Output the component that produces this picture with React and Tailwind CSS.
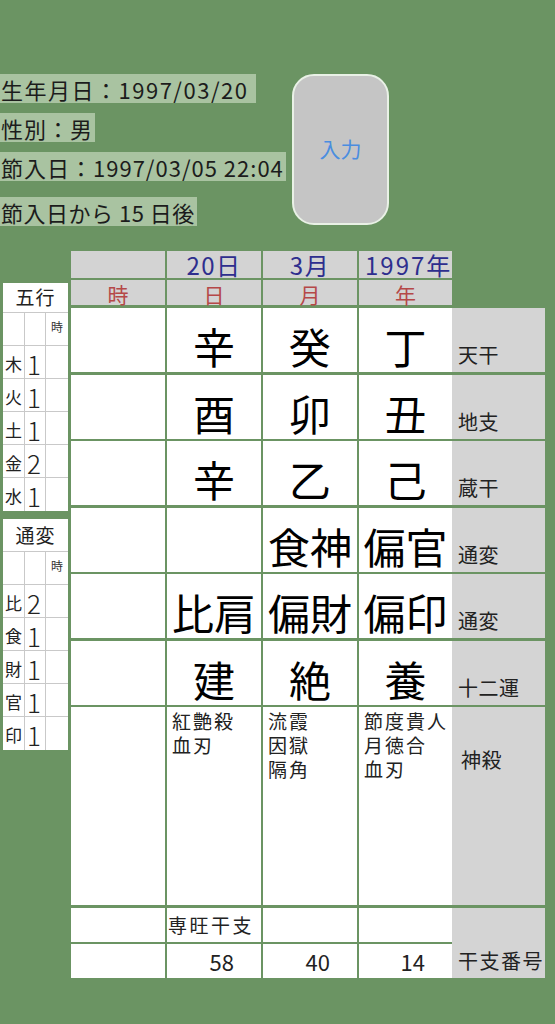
import React from "react";

const F = { fontFamily: '"Noto Sans CJK JP", "Noto Sans", sans-serif' };

function InfoLine({ children, className = "" }) {
  return (
    <div className={"h-[29px] bg-[#a9c3a1] flex items-center text-[22px] text-[#1c1c1c] leading-none whitespace-nowrap " + className}>
      <span className="pl-[1px]">{children}</span>
    </div>
  );
}

function Panel({ title, rows, headerH }) {
  return (
    <div className="w-[65px] bg-white">
      <div className={"flex items-center justify-center text-[19px] text-[#222] border-b border-[#c9c9c9] tracking-[1px] " + headerH}>
        {title}
      </div>
      <div className="flex h-[33px] border-b border-[#c9c9c9]">
        <div className="w-[22px] border-r border-[#c9c9c9]"></div>
        <div className="w-[21px] border-r border-[#c9c9c9]"></div>
        <div className="flex-1 flex items-center justify-center text-[12px] text-[#333] pb-[4px]">時</div>
      </div>
      {rows.map((r, i) => (
        <div key={i} className={"flex h-[33px] " + (i < rows.length - 1 ? "border-b border-[#c9c9c9]" : "")}>
          <div className="w-[22px] border-r border-[#c9c9c9] flex items-center pl-[2px] pt-[3px] text-[17px] text-[#222]">{r[0]}</div>
          <div className="w-[21px] border-r border-[#c9c9c9] flex items-center pl-[2px] pt-[3px] text-[26px] text-[#222] font-light leading-none">{r[1]}</div>
          <div className="flex-1"></div>
        </div>
      ))}
    </div>
  );
}

function Big({ children }) {
  return (
    <div className="w-full h-full flex items-center justify-center pt-[12px] text-[42px] leading-none text-black">
      {children}
    </div>
  );
}

function Row({ h, cells, label, labelClass = "pt-[37px]" }) {
  return (
    <div className={"flex gap-[2px] " + h}>
      <div className="w-[94px] bg-white">{cells[0]}</div>
      <div className="w-[94px] bg-white">{cells[1]}</div>
      <div className="w-[94px] bg-white">{cells[2]}</div>
      <div className="flex">
        <div className="w-[93px] bg-white">{cells[3]}</div>
        <div className={"w-[93px] bg-[#d4d4d4] pl-[6px] text-[20px] leading-[20px] tracking-[0.5px] text-[#222] " + labelClass}>
          {label}
        </div>
      </div>
    </div>
  );
}

function Shin({ lines }) {
  return (
    <div className="pl-[5px] pt-[2px] text-[19px] leading-[24px] tracking-[2px] text-[#222]">
      {lines.map((l, i) => (
        <div key={i} className="h-[24px]">{l}</div>
      ))}
    </div>
  );
}

function Num({ children }) {
  return (
    <div className="h-full flex items-center justify-end pr-[27px] text-[22px] text-[#222] leading-none">{children}</div>
  );
}

export default function App() {
  return (
    <div style={F} className="w-[555px] min-h-[1024px] h-[1024px] bg-[#6b9463] overflow-hidden">
      <div className="pt-[74px] flex">
        <div className="w-[292px] flex flex-col items-start">
          <InfoLine className="pr-[8px] tracking-[1.5px]">生年月日：1997/03/20</InfoLine>
          <InfoLine className="mt-[10px] pr-[2px] tracking-[1px]">性別：男</InfoLine>
          <InfoLine className="mt-[10px] pr-[2px] tracking-[1px]">節入日：1997/03/05 22:04</InfoLine>
          <InfoLine className="mt-[16px] pr-[2px] tracking-[0.5px]">節入日から 15 日後</InfoLine>
        </div>
        <div className="w-[97px] h-[151px] rounded-[22px] bg-[#c5c5c5] border-2 border-[#e9f1e6] flex items-center justify-center text-[21px] text-[#4a8de0] pb-[2px]">
          入力
        </div>
      </div>

      <div className="mt-[25px] flex">
        <div className="w-[71px] pl-[3px] pt-[32px] flex flex-col gap-[8px]">
          <Panel
            title="五行"
            headerH="h-[30px]"
            rows={[["木", "1"], ["火", "1"], ["土", "1"], ["金", "2"], ["水", "1"]]}
          />
          <Panel
            title="通変"
            headerH="h-[33px]"
            rows={[["比", "2"], ["食", "1"], ["財", "1"], ["官", "1"], ["印", "1"]]}
          />
        </div>

        <div className="w-[474px] flex flex-col">
          <div className="flex gap-[2px] h-[27px] text-[24px] text-[#2e2e8e] leading-[24px]">
            <div className="w-[94px] bg-[#d3d3d3]"></div>
            <div className="w-[94px] bg-[#d3d3d3] flex items-center justify-center tracking-[1.5px] pt-[1px]">20日</div>
            <div className="w-[94px] bg-[#d3d3d3] flex items-center justify-center tracking-[1.5px] pt-[1px]">3月</div>
            <div className="w-[93px] bg-[#d3d3d3] flex items-center justify-start tracking-[2px] pt-[1px] whitespace-nowrap">
              <span className="ml-[6px]">1997年</span>
            </div>
          </div>
          <div className="mt-[2px] flex gap-[2px] h-[25px] text-[21px] text-[#b54848] leading-[21px]">
            <div className="w-[94px] bg-[#d3d3d3] flex items-center justify-center pt-[3px]">時</div>
            <div className="w-[94px] bg-[#d3d3d3] flex items-center justify-center pt-[3px]">日</div>
            <div className="w-[94px] bg-[#d3d3d3] flex items-center justify-center pt-[3px]">月</div>
            <div className="w-[93px] bg-[#d3d3d3] flex items-center justify-center pt-[3px]">年</div>
          </div>

          <div className="mt-[3px] flex flex-col gap-[2.5px]">
            <Row h="h-[64px]" label="天干" cells={[null, <Big>辛</Big>, <Big>癸</Big>, <Big>丁</Big>]} />
            <Row h="h-[64px]" label="地支" cells={[null, <Big>酉</Big>, <Big>卯</Big>, <Big>丑</Big>]} />
            <Row h="h-[64px]" label="蔵干" cells={[null, <Big>辛</Big>, <Big>乙</Big>, <Big>己</Big>]} />
            <Row h="h-[64px]" label="通変" cells={[null, null, <Big>食神</Big>, <Big>偏官</Big>]} />
            <Row h="h-[64px]" label="通変" cells={[null, <Big>比肩</Big>, <Big>偏財</Big>, <Big>偏印</Big>]} />
            <Row h="h-[64px]" label="十二運" cells={[null, <Big>建</Big>, <Big>絶</Big>, <Big>養</Big>]} />
            <Row
              h="h-[198px]"
              label="神殺"
              labelClass="pt-[43px] pl-[9px]"
              cells={[
                null,
                <Shin lines={["紅艶殺", "血刃"]} />,
                <Shin lines={["流霞", "因獄", "隔角"]} />,
                <Shin lines={["節度貴人", "月徳合", "血刃"]} />,
              ]}
            />
            <Row
              h="h-[34px]"
              label=""
              cells={[
                null,
                <div className="h-full flex items-center pl-[1px] text-[19px] tracking-[2.5px] text-[#222] leading-none">専旺干支</div>,
                null,
                null,
              ]}
            />
            <Row
              h="h-[34px]"
              label="干支番号"
              labelClass="pt-[7px] pl-[4px] tracking-[1.5px]"
              cells={[null, <Num>58</Num>, <Num>40</Num>, <Num>14</Num>]}
            />
          </div>
        </div>
      </div>
    </div>
  );
}
